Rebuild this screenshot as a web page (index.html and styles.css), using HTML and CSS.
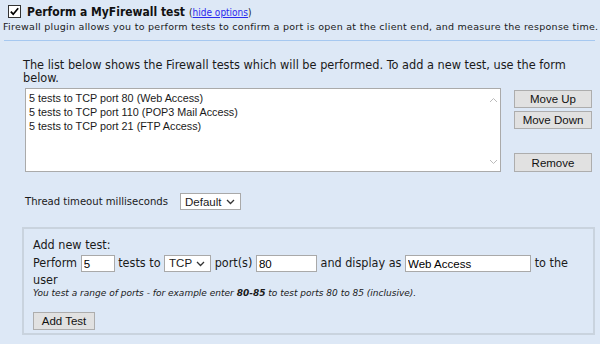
FILE: index.html
```html
<html>
<head>
	<link rel="stylesheet" href="styles.css">
</head>

<body>
	<div class="page">
		<div class="head">
			<span class="check">
				<svg width="13" height="13" viewBox="0 0 13 13"><rect x="0.5" y="0.5" width="12" height="12" fill="#fff" stroke="#333"/><path d="M2.8 6.6 L5.2 9.2 L10.2 3.2" fill="none" stroke="#000" stroke-width="1.7"/></svg>
			</span>
			<span class="title">Perform a MyFirewall test</span>
			<span class="hide">(<a href="#" class="hide-link">hide options</a>)</span>
		</div>
		<p class="desc">Firewall plugin allows you to perform tests to confirm a port is open at the client end, and measure the response time.</p>
		<div class="rule"></div>

		<div class="options">
			<p class="intro">The list below shows the Firewall tests which will be performed. To add a new test, use the form below.</p>

			<div class="list-row">
				<div class="listbox">
					<div class="items">
						<div class="item">5 tests to TCP port 80 (Web Access)</div>
						<div class="item">5 tests to TCP port 110 (POP3 Mail Access)</div>
						<div class="item">5 tests to TCP port 21 (FTP Access)</div>
					</div>
					<div class="scroll">
						<svg width="9" height="6" viewBox="0 0 9 6"><path d="M1 5 L4.5 1.5 L8 5" fill="none" stroke="#bbb" stroke-width="1"/></svg>
						<svg width="9" height="6" viewBox="0 0 9 6"><path d="M1 1 L4.5 4.5 L8 1" fill="none" stroke="#bbb" stroke-width="1"/></svg>
					</div>
				</div>
				<div class="list-buttons">
					<button type="button" class="btn">Move Up</button>
					<button type="button" class="btn">Move Down</button>
					<button type="button" class="btn btn-remove">Remove</button>
				</div>
			</div>

			<div class="timeout">
				<span class="timeout-label">Thread timeout milliseconds</span>
				<span class="select select-default">Default
					<svg width="9" height="6" viewBox="0 0 9 6"><path d="M1 1 L4.5 4.5 L8 1" fill="none" stroke="#333" stroke-width="1.3"/></svg>
				</span>
			</div>

			<div class="addbox">
				<div class="add-title">Add new test:</div>
				<div class="add-line">
					Perform <input type="text" class="field field-count" value="5"> tests to
					<span class="select select-proto">TCP
						<svg width="9" height="6" viewBox="0 0 9 6"><path d="M1 1 L4.5 4.5 L8 1" fill="none" stroke="#333" stroke-width="1.3"/></svg>
					</span>
					port(s) <input type="text" class="field field-port" value="80">
					and display as <input type="text" class="field field-name" value="Web Access"> to the user
				</div>
				<p class="note">You test a range of ports - for example enter <b>80-85</b> to test ports 80 to 85 (inclusive).</p>
				<button type="button" class="btn btn-add">Add Test</button>
			</div>
		</div>
	</div>
</body>

</html>
```

FILE: styles.css
```css
body{
	margin: 0;
	background-color: #dde8f6;
	font-family: "DejaVu Sans Condensed", "DejaVu Sans", sans-serif;
	color: #1a1a1a;
}

.page{
	width: 600px;
	height: 344px;
	overflow: hidden;
}

.head{
	display: flex;
	align-items: center;
	padding: 5px 0 0 8px;
	height: 13px;
}

.check{
	display: flex;
	margin-right: 6px;
}

.title{
	font-weight: bold;
	font-size: 12px;
	color: #111;
}

.hide{
	font-size: 10px;
	margin-left: 4px;
	margin-top: 2px;
}

.hide-link{
	color: #2a2aee;
}

.desc{
	margin: 3px 0 0 3px;
	font-family: "DejaVu Sans", sans-serif;
	font-size: 9.5px;
	letter-spacing: 0.27px;
	white-space: nowrap;
}

.rule{
	margin: 8px 5px 0 4px;
	height: 1px;
	background-color: #a6c8f0;
}

.options{
	padding: 0 5px 0 22px;
}

.intro{
	margin: 17px 0 0 1px;
	font-size: 12.6px;
	line-height: 13px;
	width: 560px;
}

.list-row{
	display: flex;
	margin-top: 4px;
	margin-left: 3px;
}

.listbox{
	width: 474px;
	height: 82px;
	background-color: #fff;
	border: 1px solid #aaaaaa;
	display: flex;
}

.items{
	flex: 1;
	padding: 2px 3px;
	font-family: "Liberation Sans", sans-serif;
	font-size: 10.8px;
	line-height: 14px;
}

.scroll{
	width: 14px;
	display: flex;
	flex-direction: column;
	justify-content: space-between;
	align-items: center;
	padding: 8px 0 6px;
}

.list-buttons{
	display: flex;
	flex-direction: column;
	margin-left: 13px;
	margin-top: 2px;
}

.btn{
	width: 78px;
	height: 18px;
	padding: 0;
	margin: 0 0 3px 0;
	background-color: #e1e1e1;
	border: 1px solid #adadad;
	font-family: "Liberation Sans", sans-serif;
	font-size: 11.5px;
	color: #111;
}

.btn-remove{
	margin-top: 21px;
	height: 19px;
}

.timeout{
	display: flex;
	align-items: center;
	margin: 18px 0 0 3px;
	font-size: 11.2px;
}

.timeout-label{
	width: 155px;
}

.select{
	display: inline-flex;
	align-items: center;
	justify-content: space-between;
	height: 15px;
	padding: 0 5px 0 4px;
	background-color: #fff;
	border: 1px solid #a9a9a9;
	font-family: "Liberation Sans", sans-serif;
	font-size: 11.5px;
	vertical-align: middle;
	box-sizing: content-box;
}

.add-line .select{
	margin: -2px 0;
}

.select-default{
	width: 50px;
}

.select-proto{
	width: 36px;
}

.addbox{
	margin-top: 17px;
	border: 2px solid #c9d3de;
	padding: 9px 14px 9px 9px;
	height: 86px;
}

.add-title{
	font-size: 12.5px;
	line-height: 14px;
}

.add-line{
	font-size: 12.5px;
	line-height: 17px;
	margin-top: 2px;
}

.field{
	height: 17px;
	padding: 0 2px;
	border: 1px solid #a9a9a9;
	font-family: "Liberation Sans", sans-serif;
	font-size: 11.5px;
	box-sizing: border-box;
	vertical-align: middle;
	margin: -2px 0;
}

.field-count{
	width: 34px;
}

.field-port{
	width: 61px;
}

.field-name{
	width: 126px;
}

.note{
	margin: 0;
	font-family: "DejaVu Sans", sans-serif;
	font-size: 9px;
	font-style: italic;
}

.btn-add{
	margin-top: 14px;
	width: 62px;
}
```
